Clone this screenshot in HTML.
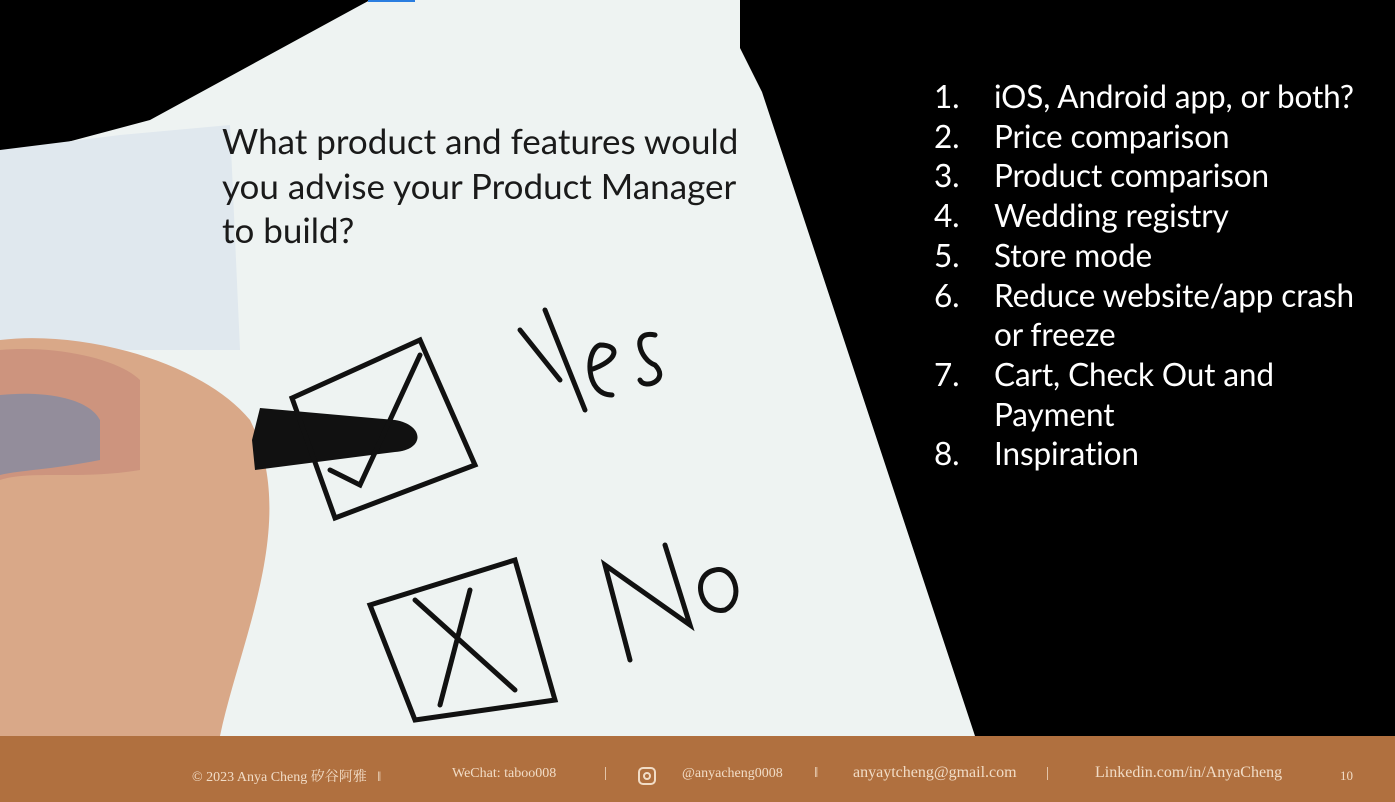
<!DOCTYPE html>
<html><head><meta charset="utf-8"><style>
body{margin:0;width:1395px;height:802px;overflow:hidden;background:#000;position:relative;font-family:"Lato","Liberation Sans",sans-serif}
.q{position:absolute;left:222px;top:119px;font-size:35px;line-height:44.5px;color:#1a1a1a;letter-spacing:0px}
.list{position:absolute;left:934px;top:77px;color:#fff;font-size:31.5px;line-height:39.7px;letter-spacing:-0.1px}
.list div{position:relative;padding-left:60px}
.list span{position:absolute;left:0}
.foot{position:absolute;left:0;top:736px;width:1395px;height:66px;background:#b0703f;color:#f1dcc6;font-family:"Liberation Serif","Noto Serif CJK SC",serif;font-size:15px}
.foot div{position:absolute;top:29px}
</style></head><body>
<svg width="1395" height="736" style="position:absolute;left:0;top:0">
<polygon points="370,0 740,0 740,48 762,92 975,736 0,736 0,160 150,120" fill="#eef3f2"/>
<polygon points="0,150 120,135 230,125 240,350 0,350" fill="#e0e8ee"/>
<polygon points="150,0 370,0 160,110" fill="#000"/>
<rect x="368" y="0" width="47" height="2" fill="#2a7de0"/>
<path d="M0,340 C80,330 200,360 250,420 C300,520 240,640 220,736 L0,736 Z" fill="#d9a888"/>
<path d="M0,350 C60,345 120,360 140,380 L140,470 C80,480 30,470 0,480Z" fill="#c98f7c" opacity="0.8"/>
<path d="M0,395 C50,390 90,400 100,420 L100,460 C50,470 20,470 0,475Z" fill="#7a8aa8" opacity="0.7"/>
<path d="M252,440 L260,408 L395,420 C425,425 425,450 395,452 L255,470 Z" fill="#111"/>
<g fill="none" stroke="#111" stroke-width="5" stroke-linecap="round">
<path d="M292,398 L420,340 L475,465 L335,518 Z"/>
<path d="M330,470 L360,485 L420,355"/>
<path d="M520,330 L560,380 M545,310 L585,410 M590,370 C620,360 620,345 600,345 C585,350 585,395 612,395 M655,335 C630,330 640,360 655,365 C670,380 645,390 640,380"/>
<path d="M370,605 L515,560 L555,700 L415,720 Z"/>
<path d="M415,600 L515,690 M470,590 L440,705"/>
<path d="M630,660 L605,565 L690,625 L665,545 M715,570 C690,575 700,615 725,610 C745,600 735,565 715,570"/>
</g>
</svg>
<div class="q">What product and features would<br>you advise your Product Manager<br>to build?</div>
<div class="list">
<div><span>1.</span>iOS, Android app, or both?</div>
<div><span>2.</span>Price comparison</div>
<div><span>3.</span>Product comparison</div>
<div><span>4.</span>Wedding registry</div>
<div><span>5.</span>Store mode</div>
<div><span>6.</span>Reduce website/app crash<br>or freeze</div>
<div><span>7.</span>Cart, Check Out and<br>Payment</div>
<div><span>8.</span>Inspiration</div>
</div>
<div class="foot">
<div style="left:192px;font-size:14px;top:30px">© 2023 Anya Cheng 矽谷阿雅 &nbsp;&nbsp;‖</div>
<div style="left:452px;font-size:14px;top:30px">WeChat: taboo008</div>
<div style="left:604px">|</div>
<div style="left:638px;top:31px;width:18px;height:18px;border:2px solid #f1dcc6;border-radius:5px;box-sizing:border-box"><div style="position:absolute;left:3px;top:3px;width:8px;height:8px;border:2px solid #f1dcc6;border-radius:50%;box-sizing:border-box"></div></div>
<div style="left:682px;font-size:14px;top:30px">@anyacheng0008</div>
<div style="left:814px">‖</div>
<div style="left:853px;font-size:16px;top:28px">anyaytcheng@gmail.com</div>
<div style="left:1046px">|</div>
<div style="left:1095px;font-size:16px;top:28px">Linkedin.com/in/AnyaCheng</div>
<div style="left:1340px;font-size:13px;top:32px">10</div>
</div>
</body></html>
